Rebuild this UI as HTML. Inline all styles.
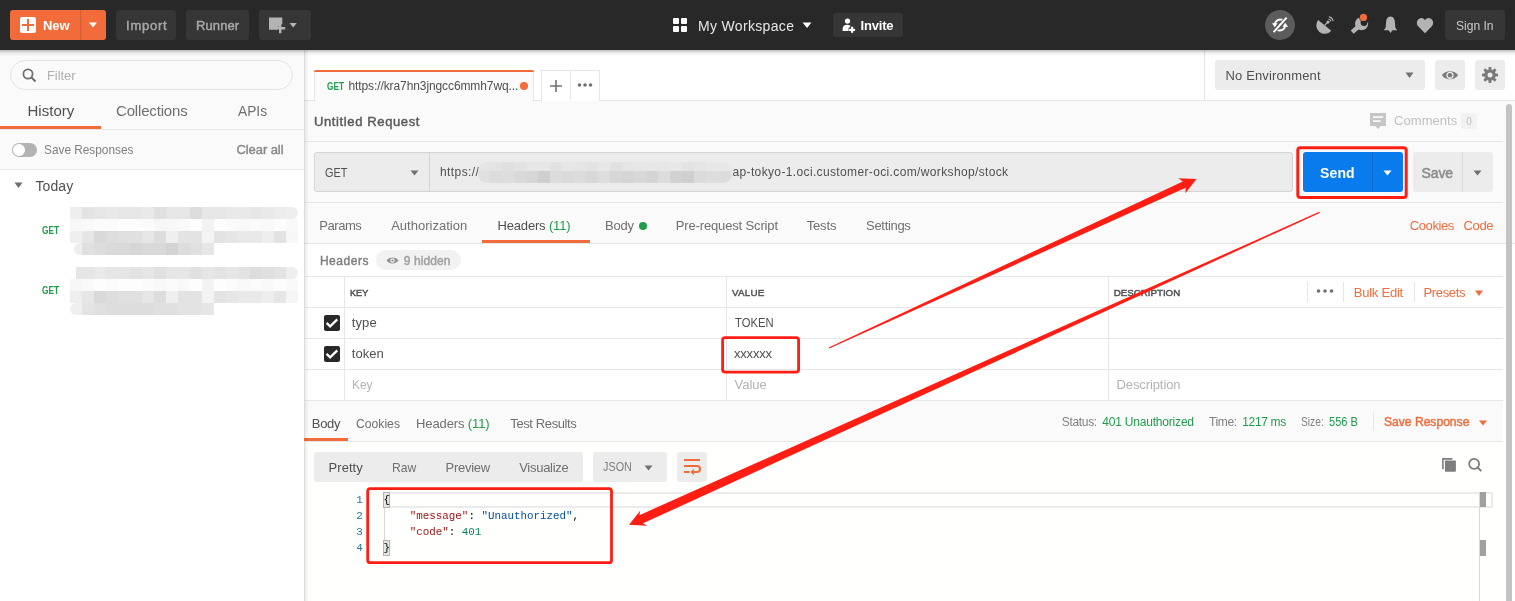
<!DOCTYPE html>
<html><head><meta charset="utf-8"><style>
html,body{margin:0;padding:0;}
body{width:1515px;height:601px;overflow:hidden;position:relative;background:#fff;font-family:"Liberation Sans",sans-serif;}
.t{position:absolute;white-space:pre;-webkit-font-smoothing:antialiased;}
#root{position:absolute;left:0;top:0;width:1515px;height:601px;will-change:transform;}
.r{position:absolute;}
</style></head><body><div id="root">
<div class="r" style="left:0px;top:50px;width:304px;height:551px;background:#fafafa;"></div>
<div class="r" style="left:304px;top:50px;width:1px;height:551px;background:#dcdcdc;"></div>
<div class="r" style="left:305px;top:50px;width:4px;height:551px;background:linear-gradient(90deg,rgba(0,0,0,0.07),rgba(0,0,0,0));z-index:4;"></div>
<div class="r" style="left:305px;top:50px;width:1210px;height:50px;background:#ffffff;"></div>
<div class="r" style="left:305px;top:100px;width:1210px;height:1px;background:#e6e6e6;"></div>
<div class="r" style="left:305px;top:101px;width:1210px;height:142px;background:#fafafa;"></div>
<div class="r" style="left:305px;top:243px;width:1210px;height:1px;background:#e6e6e6;"></div>
<div class="r" style="left:305px;top:244px;width:1198px;height:157px;background:#ffffff;"></div>
<div class="r" style="left:305px;top:401px;width:1198px;height:40px;background:#fafafa;"></div>
<div class="r" style="left:305px;top:441px;width:1198px;height:1px;background:#e6e6e6;"></div>
<div class="r" style="left:305px;top:442px;width:1198px;height:159px;background:#fffffe;"></div>
<div class="r" style="left:0px;top:0px;width:1515px;height:50px;background:#282828;"></div>
<div class="r" style="left:0px;top:50px;width:1515px;height:6px;background:linear-gradient(rgba(0,0,0,0.26),rgba(0,0,0,0.06) 50%,rgba(0,0,0,0));z-index:5;"></div>
<div class="r" style="left:10px;top:10px;width:96px;height:30px;background:#f26b3a;border-radius:3px;"></div>
<div class="r" style="left:80px;top:10px;width:1px;height:30px;background:rgba(0,0,0,0.12);"></div>
<div class="r" style="left:20px;top:17px;width:16px;height:16px;background:#ffffff;border-radius:2px;"></div>
<div class="r" style="left:27px;top:19px;width:2px;height:12px;background:#f26b3a;"></div>
<div class="r" style="left:22px;top:24px;width:12px;height:2px;background:#f26b3a;"></div>
<div class="t" style="left:43.1px;top:19.10px;font-size:13px;line-height:13px;font-weight:700;color:#ffffff;letter-spacing:-0.15px;">New</div>
<svg class="r" style="left:88px;top:22px" width="10" height="6"><path d="M1 0.5H9L5 5.5Z" fill="#fff"/></svg>
<div class="r" style="left:116px;top:10px;width:60px;height:30px;background:#363636;border-radius:3px;"></div>
<div class="t" style="left:126.1px;top:19.20px;font-size:13px;line-height:13px;font-weight:400;-webkit-text-stroke:0.45px #a8a8a8;color:#a8a8a8;letter-spacing:0.74px;">Import</div>
<div class="r" style="left:186px;top:10px;width:63px;height:30px;background:#363636;border-radius:3px;"></div>
<div class="t" style="left:196.1px;top:19.20px;font-size:13px;line-height:13px;font-weight:400;-webkit-text-stroke:0.45px #a8a8a8;color:#a8a8a8;letter-spacing:0.08px;">Runner</div>
<div class="r" style="left:259px;top:10px;width:52px;height:30px;background:#363636;border-radius:3px;"></div>
<svg class="r" style="left:268px;top:16px" width="36" height="18"><path d="M1 1.4H14.3V8.2H12V10.7H9.3V13.8H1Z" fill="#b3b3b3"/><path d="M12.2 7.2V17.2M7.2 12.2H17.2" stroke="#b3b3b3" stroke-width="2.4"/><path d="M21.5 7H28.8L25.15 11.6Z" fill="#b3b3b3"/></svg>
<svg class="r" style="left:673px;top:18px" width="14" height="14"><rect x="0" y="0" width="6" height="6" rx="1" fill="#fff"/><rect x="8" y="0" width="6" height="6" rx="1" fill="#fff"/><rect x="0" y="8" width="6" height="6" rx="1" fill="#fff"/><rect x="8" y="8" width="6" height="6" rx="1" fill="#fff"/></svg>
<div class="t" style="left:697.9px;top:19.15px;font-size:14px;line-height:14px;font-weight:400;color:#e6e6e6;letter-spacing:0.34px;">My Workspace</div>
<svg class="r" style="left:802px;top:22px" width="10" height="7"><path d="M0.5 0.5H9.5L5 6Z" fill="#fff"/></svg>
<div class="r" style="left:833px;top:13px;width:70px;height:24px;background:#363636;border-radius:3px;"></div>
<svg class="r" style="left:842px;top:17px" width="15" height="17"><circle cx="5.5" cy="4.1" r="2.6" fill="#fff"/><path d="M0.6 14.1V11.8C0.6 9.3 2.6 7.8 5.2 7.8C7.4 7.8 8.8 8.8 9.4 10.5V14.1Z" fill="#fff"/><path d="M10.1 9.3V16.3M6.6 12.8H13.6" stroke="#363636" stroke-width="4.4"/><path d="M10.1 9.8V15.8M7.1 12.8H13.1" stroke="#fff" stroke-width="2.2"/></svg>
<div class="t" style="left:860.5px;top:19.00px;font-size:13px;line-height:13px;font-weight:700;color:#ffffff;letter-spacing:-0.19px;">Invite</div>
<svg class="r" style="left:1265px;top:10px" width="30" height="30"><circle cx="15" cy="15" r="15" fill="#5c5c5c"/><path d="M17.9 10.3A5.4 5.4 0 0 0 9.8 14.2" fill="none" stroke="#fff" stroke-width="1.9"/><path d="M6.9 13.2L12.6 13.2 9.8 17.2Z" fill="#fff"/><path d="M12.1 19.7A5.4 5.4 0 0 0 20.2 15.8" fill="none" stroke="#fff" stroke-width="1.9"/><path d="M17.4 16.8L23.1 16.8 20.2 12.8Z" fill="#fff"/><path d="M8.6 22.2L21.6 7.6" stroke="#5c5c5c" stroke-width="3.5"/><path d="M8.6 22.2L21.6 7.6" stroke="#fff" stroke-width="2"/></svg>
<svg class="r" style="left:1314px;top:13px" width="22" height="22"><path d="M4.2 7A8.4 8.4 0 0 0 17.3 17.7Z" fill="#b3b3b3"/><path d="M10.6 12.4L14 9" stroke="#b3b3b3" stroke-width="1.3"/><circle cx="14" cy="9" r="1.5" fill="#b3b3b3"/><path d="M14.6 6.1A2.9 2.9 0 0 1 16.9 8.4M14.9 3.9A5 5 0 0 1 19.1 8.1" fill="none" stroke="#b3b3b3" stroke-width="1.1"/></svg>
<svg class="r" style="left:1350px;top:10px" width="22" height="25"><circle cx="11.6" cy="13.7" r="6.6" fill="#b3b3b3"/><path d="M13.1 15.4L3.7 23.8 0.7 20.4 10.1 12Z" fill="#b3b3b3"/><circle cx="14" cy="12.5" r="3.4" fill="#282828"/><path d="M14 12.5L20 6 20 12Z" fill="#282828"/><circle cx="13.5" cy="7.4" r="4.3" fill="#282828"/><circle cx="13.5" cy="7.4" r="3.6" fill="#f26b3a"/></svg>
<svg class="r" style="left:1382px;top:15px" width="17" height="19"><path d="M8.5 1.6C11.6 1.6 12.8 4.5 13 8L13.3 12.5L15.2 15.3H1.8L3.7 12.5L4 8C4.2 4.5 5.4 1.6 8.5 1.6Z" fill="#b3b3b3"/><path d="M6.4 15L8.5 18.1L10.6 15Z" fill="#b3b3b3"/></svg>
<svg class="r" style="left:1416px;top:17px" width="18" height="17"><path d="M9 16.2L2.2 9.2C0.2 7.2 0.5 3.5 2.8 1.9C5 0.4 7.7 1.2 9 3.2C10.3 1.2 13 0.4 15.2 1.9C17.5 3.5 17.8 7.2 15.8 9.2Z" fill="#b3b3b3"/></svg>
<div class="r" style="left:1445px;top:10px;width:60px;height:30px;background:#363636;border-radius:3px;"></div>
<div class="t" style="left:1455.9px;top:19.10px;font-size:13px;line-height:13px;font-weight:400;color:#c8c8c8;transform:scaleX(0.928);transform-origin:0 0;">Sign In</div>
<div class="r" style="left:10px;top:60px;width:283px;height:30px;background:#fafafa;border:1px solid #e3e3e3;border-radius:15px;box-sizing:border-box;"></div>
<svg class="r" style="left:22px;top:68px" width="15" height="15"><circle cx="6" cy="6" r="4.6" fill="none" stroke="#707070" stroke-width="1.8"/><path d="M9.5 9.5L13.5 13.5" stroke="#707070" stroke-width="2"/></svg>
<div class="t" style="left:47.0px;top:69.00px;font-size:13px;line-height:13px;font-weight:400;color:#b0b0b0;letter-spacing:-0.07px;">Filter</div>
<div class="t" style="left:27.5px;top:103.30px;font-size:15px;line-height:15px;font-weight:400;color:#505050;letter-spacing:0.02px;">History</div>
<div class="t" style="left:116.0px;top:103.30px;font-size:15px;line-height:15px;font-weight:400;color:#707070;letter-spacing:-0.17px;">Collections</div>
<div class="t" style="left:238.2px;top:103.30px;font-size:15px;line-height:15px;font-weight:400;color:#707070;transform:scaleX(0.918);transform-origin:0 0;">APIs</div>
<div class="r" style="left:0px;top:126px;width:101px;height:3px;background:#f26b3a;"></div>
<div class="r" style="left:0px;top:129px;width:304px;height:1px;background:#e6e6e6;"></div>
<div class="r" style="left:12px;top:143px;width:25px;height:14px;background:#b3b3b3;border-radius:7px;"></div>
<div class="r" style="left:13px;top:144px;width:12px;height:12px;background:#ffffff;border-radius:6px;"></div>
<div class="t" style="left:43.5px;top:142.90px;font-size:13px;line-height:13px;font-weight:400;color:#808080;transform:scaleX(0.910);transform-origin:0 0;">Save Responses</div>
<div class="t" style="left:236.5px;top:142.90px;font-size:13px;line-height:13px;font-weight:400;-webkit-text-stroke:0.45px #8a8a8a;color:#8a8a8a;letter-spacing:-0.08px;">Clear all</div>
<div class="r" style="left:0px;top:169px;width:304px;height:1px;background:#e6e6e6;"></div>
<div class="r" style="left:0px;top:170px;width:304px;height:431px;background:#ffffff;"></div>
<svg class="r" style="left:14px;top:182px" width="9" height="7"><path d="M0.5 0.5H8.5L4.5 6Z" fill="#707070"/></svg>
<div class="t" style="left:35.5px;top:179.15px;font-size:14px;line-height:14px;font-weight:400;color:#505050;letter-spacing:0.07px;">Today</div>
<div class="t" style="left:42.3px;top:225.63px;font-size:10px;line-height:10px;font-weight:700;color:#1f9d4c;transform:scaleX(0.830);transform-origin:0 0;">GET</div>
<div class="t" style="left:42.3px;top:285.64px;font-size:10px;line-height:10px;font-weight:700;color:#1f9d4c;transform:scaleX(0.830);transform-origin:0 0;">GET</div>
<div class="r" style="left:314px;top:70px;width:220px;height:31px;background:#fafafa;border:1px solid #e6e6e6;border-bottom:none;border-top:none;box-sizing:border-box;"></div>
<div class="r" style="left:314px;top:70px;width:220px;height:2px;background:#f26b3a;border-radius:2px 2px 0 0;"></div>
<div class="t" style="left:326.5px;top:81.83px;font-size:10px;line-height:10px;font-weight:700;color:#1f9d4c;transform:scaleX(0.825);transform-origin:0 0;">GET</div>
<div class="t" style="left:348.5px;top:80.44px;font-size:12px;line-height:12px;font-weight:400;color:#505050;letter-spacing:-0.10px;">https://kra7hn3jngcc6mmh7wq...</div>
<div class="r" style="left:520px;top:82px;width:8px;height:8px;border-radius:4px;background:#f26b3a"></div>
<div class="r" style="left:541px;top:70px;width:59px;height:31px;background:#ffffff;border:1px solid #e6e6e6;border-bottom:none;box-sizing:border-box;"></div>
<div class="r" style="left:570px;top:70px;width:1px;height:30px;background:#e6e6e6;"></div>
<svg class="r" style="left:549px;top:79px" width="14" height="14"><path d="M7 1V13M1 7H13" stroke="#707070" stroke-width="1.6"/></svg>
<svg class="r" style="left:577px;top:82px" width="16" height="6"><circle cx="2.5" cy="3" r="1.8" fill="#707070"/><circle cx="8" cy="3" r="1.8" fill="#707070"/><circle cx="13.5" cy="3" r="1.8" fill="#707070"/></svg>
<div class="r" style="left:1204px;top:50px;width:1px;height:50px;background:#e6e6e6;"></div>
<div class="r" style="left:1215px;top:60px;width:210px;height:30px;background:#ececec;border-radius:3px;"></div>
<div class="t" style="left:1225.5px;top:69.20px;font-size:13px;line-height:13px;font-weight:400;color:#505050;letter-spacing:0.14px;">No Environment</div>
<svg class="r" style="left:1405px;top:72px" width="9" height="7"><path d="M0.5 0.5H8.5L4.5 6Z" fill="#707070"/></svg>
<div class="r" style="left:1435px;top:60px;width:30px;height:30px;background:#ececec;border-radius:3px;"></div>
<svg class="r" style="left:1441px;top:70px" width="18" height="11"><path d="M1 5.3C4 0 14 0 17 5.3C14 10.6 4 10.6 1 5.3Z" fill="#7a7a7a"/><circle cx="9" cy="5.3" r="3.6" fill="#ececec"/><circle cx="9" cy="5.3" r="2.3" fill="#7a7a7a"/><path d="M9 5.3L9 2.9A2.4 2.4 0 0 1 11.4 5.3Z" fill="#ececec" opacity="0"/></svg>
<div class="r" style="left:1475px;top:60px;width:30px;height:30px;background:#ececec;border-radius:3px;"></div>
<svg class="r" style="left:1482px;top:67px" width="16" height="16"><g fill="#7a7a7a"><circle cx="8" cy="8" r="5.8"/><rect x="6.6" y="0" width="2.8" height="16"/><rect x="0" y="6.6" width="16" height="2.8"/><rect x="6.6" y="0" width="2.8" height="16" transform="rotate(45 8 8)"/><rect x="6.6" y="0" width="2.8" height="16" transform="rotate(-45 8 8)"/></g><circle cx="8" cy="8" r="2.5" fill="#ececec"/></svg>
<div class="t" style="left:313.9px;top:115.00px;font-size:13px;line-height:13px;font-weight:400;-webkit-text-stroke:0.45px #5a5a5a;color:#5a5a5a;letter-spacing:0.63px;">Untitled Request</div>
<svg class="r" style="left:1370px;top:113px" width="16" height="16"><path d="M0 0H16V13H10.8L8 15.9 5.2 13H0Z" fill="#c6c6c6"/><path d="M3 4.1H13.2M3 8.1H10.6" stroke="#fafafa" stroke-width="1.9"/></svg>
<div class="t" style="left:1394.1px;top:114.00px;font-size:13px;line-height:13px;font-weight:400;color:#c0c0c0;letter-spacing:0.03px;">Comments</div>
<div class="r" style="left:1461px;top:113px;width:16px;height:16px;background:#f2f2f2;border-radius:2px;"></div>
<div class="t" style="left:1466.3px;top:116.53px;font-size:10px;line-height:10px;font-weight:400;color:#c0c0c0;">0</div>
<div class="r" style="left:305px;top:141px;width:1198px;height:1px;background:#e6e6e6;"></div>
<div class="r" style="left:314px;top:152px;width:979px;height:40px;background:#ececec;border:1px solid #d4d4d4;border-radius:3px;box-sizing:border-box;"></div>
<div class="r" style="left:429px;top:153px;width:1px;height:38px;background:#d4d4d4;"></div>
<div class="t" style="left:325.1px;top:166.84px;font-size:12px;line-height:12px;font-weight:400;color:#505050;transform:scaleX(0.903);transform-origin:0 0;">GET</div>
<svg class="r" style="left:410px;top:170px" width="9" height="6"><path d="M0.5 0.5H8.5L4.5 5.5Z" fill="#707070"/></svg>
<div class="t" style="left:439.9px;top:165.84px;font-size:12px;line-height:12px;font-weight:400;color:#505050;letter-spacing:0.43px;">https://</div>
<div class="t" style="left:732.5px;top:165.84px;font-size:12px;line-height:12px;font-weight:400;color:#505050;letter-spacing:0.36px;">ap-tokyo-1.oci.customer-oci.com/workshop/stock</div>
<div class="r" style="left:1303px;top:152px;width:100px;height:40px;background:#097bed;border-radius:3px;"></div>
<div class="r" style="left:1372px;top:152px;width:1px;height:40px;background:rgba(0,0,0,0.12);"></div>
<div class="t" style="left:1320.1px;top:166.15px;font-size:14px;line-height:14px;font-weight:700;color:#ffffff;letter-spacing:0.10px;">Send</div>
<svg class="r" style="left:1383px;top:170px" width="9" height="6"><path d="M0.5 0.5H8.5L4.5 5.5Z" fill="#fff"/></svg>
<div class="r" style="left:1413px;top:152px;width:80px;height:40px;background:#ececec;border-radius:3px;"></div>
<div class="r" style="left:1462px;top:152px;width:1px;height:40px;background:#dcdcdc;"></div>
<div class="t" style="left:1421.5px;top:166.15px;font-size:14px;line-height:14px;font-weight:400;-webkit-text-stroke:0.45px #8a8a8a;color:#8a8a8a;letter-spacing:-0.10px;">Save</div>
<svg class="r" style="left:1473px;top:170px" width="9" height="6"><path d="M0.5 0.5H8.5L4.5 5.5Z" fill="#707070"/></svg>
<div class="r" style="left:305px;top:202px;width:1198px;height:1px;background:#e6e6e6;"></div>
<div class="t" style="left:319.2px;top:219.40px;font-size:13px;line-height:13px;font-weight:400;color:#707070;letter-spacing:-0.43px;">Params</div>
<div class="t" style="left:391.2px;top:219.40px;font-size:13px;line-height:13px;font-weight:400;color:#707070;letter-spacing:0.01px;">Authorization</div>
<div class="t" style="left:497.5px;top:219.40px;font-size:13px;line-height:13px;font-weight:400;color:#505050;letter-spacing:-0.17px;">Headers <span style="color:#1f9d4c">(11)</span></div>
<div class="r" style="left:482px;top:240px;width:108px;height:3px;background:#f26b3a;"></div>
<div class="t" style="left:605.1px;top:219.40px;font-size:13px;line-height:13px;font-weight:400;color:#707070;letter-spacing:-0.20px;">Body</div>
<div class="r" style="left:639px;top:222px;width:8px;height:8px;border-radius:4px;background:#1f9d4c"></div>
<div class="t" style="left:675.7px;top:219.40px;font-size:13px;line-height:13px;font-weight:400;color:#707070;letter-spacing:-0.14px;">Pre-request Script</div>
<div class="t" style="left:806.7px;top:219.40px;font-size:13px;line-height:13px;font-weight:400;color:#707070;letter-spacing:-0.15px;">Tests</div>
<div class="t" style="left:866.1px;top:219.40px;font-size:13px;line-height:13px;font-weight:400;color:#707070;letter-spacing:-0.32px;">Settings</div>
<div class="t" style="left:1409.8px;top:219.40px;font-size:13px;line-height:13px;font-weight:400;color:#f26b3a;letter-spacing:-0.42px;">Cookies</div>
<div class="t" style="left:1463.5px;top:219.40px;font-size:13px;line-height:13px;font-weight:400;color:#f26b3a;letter-spacing:-0.35px;">Code</div>
<div class="t" style="left:319.9px;top:255.24px;font-size:12px;line-height:12px;font-weight:400;-webkit-text-stroke:0.45px #808080;color:#808080;letter-spacing:0.53px;">Headers</div>
<div class="r" style="left:376px;top:250px;width:85px;height:20px;background:#f2f2f2;border-radius:10px;"></div>
<svg class="r" style="left:386px;top:256px" width="13" height="9"><path d="M0.5 4.5C3 0.5 10 0.5 12.5 4.5C10 8.5 3 8.5 0.5 4.5Z" fill="#909090"/><circle cx="6.5" cy="4.5" r="2.2" fill="#f2f2f2"/><circle cx="6.5" cy="4.5" r="1.1" fill="#909090"/></svg>
<div class="t" style="left:403.8px;top:255.24px;font-size:12px;line-height:12px;font-weight:400;-webkit-text-stroke:0.45px #a0a0a0;color:#a0a0a0;letter-spacing:0.09px;">9 hidden</div>
<div class="r" style="left:305px;top:276px;width:1198px;height:1px;background:#e6e6e6;"></div>
<div class="r" style="left:305px;top:307px;width:1198px;height:1px;background:#e6e6e6;"></div>
<div class="r" style="left:305px;top:338px;width:1198px;height:1px;background:#e6e6e6;"></div>
<div class="r" style="left:305px;top:369px;width:1198px;height:1px;background:#e6e6e6;"></div>
<div class="r" style="left:305px;top:400px;width:1198px;height:1px;background:#e6e6e6;"></div>
<div class="r" style="left:344px;top:277px;width:1px;height:123px;background:#e6e6e6;"></div>
<div class="r" style="left:726px;top:277px;width:1px;height:123px;background:#e6e6e6;"></div>
<div class="r" style="left:1108px;top:277px;width:1px;height:123px;background:#e6e6e6;"></div>
<div class="t" style="left:349.9px;top:287.70px;font-size:9.8px;line-height:9.8px;font-weight:400;-webkit-text-stroke:0.45px #505050;color:#505050;transform:scaleX(0.930);transform-origin:0 0;">KEY</div>
<div class="t" style="left:732.1px;top:287.70px;font-size:9.8px;line-height:9.8px;font-weight:400;-webkit-text-stroke:0.45px #505050;color:#505050;letter-spacing:0.19px;">VALUE</div>
<div class="t" style="left:1113.7px;top:287.70px;font-size:9.8px;line-height:9.8px;font-weight:400;-webkit-text-stroke:0.45px #505050;color:#505050;letter-spacing:-0.04px;">DESCRIPTION</div>
<div class="r" style="left:1307px;top:282px;width:1px;height:20px;background:#e6e6e6;"></div>
<svg class="r" style="left:1316px;top:288px" width="18" height="6"><circle cx="2.5" cy="3" r="1.8" fill="#707070"/><circle cx="9" cy="3" r="1.8" fill="#707070"/><circle cx="15.5" cy="3" r="1.8" fill="#707070"/></svg>
<div class="r" style="left:1343px;top:282px;width:1px;height:20px;background:#e6e6e6;"></div>
<div class="t" style="left:1353.7px;top:286.40px;font-size:13px;line-height:13px;font-weight:400;color:#f26b3a;letter-spacing:-0.22px;">Bulk Edit</div>
<div class="r" style="left:1414px;top:282px;width:1px;height:20px;background:#e6e6e6;"></div>
<div class="t" style="left:1423.5px;top:286.40px;font-size:13px;line-height:13px;font-weight:400;color:#f26b3a;letter-spacing:-0.34px;">Presets</div>
<svg class="r" style="left:1475px;top:290px" width="8" height="7"><path d="M0 0.5H8L4 6Z" fill="#f26b3a"/></svg>
<div class="r" style="left:324px;top:315px;width:16px;height:16px;background:#282828;border-radius:2px;"></div>
<svg class="r" style="left:324px;top:315px" width="16" height="16"><path d="M2.6 7.9L6.1 11.4 13.3 4.4" fill="none" stroke="#fff" stroke-width="2.3"/></svg>
<div class="r" style="left:324px;top:346px;width:16px;height:16px;background:#282828;border-radius:2px;"></div>
<svg class="r" style="left:324px;top:346px" width="16" height="16"><path d="M2.6 7.9L6.1 11.4 13.3 4.4" fill="none" stroke="#fff" stroke-width="2.3"/></svg>
<div class="t" style="left:351.8px;top:316.00px;font-size:13px;line-height:13px;font-weight:400;color:#505050;letter-spacing:0.09px;">type</div>
<div class="t" style="left:351.8px;top:347.00px;font-size:13px;line-height:13px;font-weight:400;color:#505050;letter-spacing:0.06px;">token</div>
<div class="t" style="left:351.8px;top:378.00px;font-size:13px;line-height:13px;font-weight:400;color:#b3b3b3;transform:scaleX(0.917);transform-origin:0 0;">Key</div>
<div class="t" style="left:734.5px;top:316.00px;font-size:13px;line-height:13px;font-weight:400;color:#505050;transform:scaleX(0.864);transform-origin:0 0;">TOKEN</div>
<div class="t" style="left:734.0px;top:347.00px;font-size:13px;line-height:13px;font-weight:400;color:#505050;letter-spacing:-0.19px;">xxxxxx</div>
<div class="t" style="left:734.5px;top:378.00px;font-size:13px;line-height:13px;font-weight:400;color:#b3b3b3;">Value</div>
<div class="t" style="left:1116.5px;top:378.00px;font-size:13px;line-height:13px;font-weight:400;color:#b3b3b3;letter-spacing:-0.10px;">Description</div>
<div class="t" style="left:311.8px;top:417.40px;font-size:13px;line-height:13px;font-weight:400;color:#505050;letter-spacing:-0.30px;">Body</div>
<div class="r" style="left:304px;top:438px;width:44px;height:3px;background:#f26b3a;"></div>
<div class="t" style="left:356.1px;top:417.40px;font-size:13px;line-height:13px;font-weight:400;color:#707070;transform:scaleX(0.936);transform-origin:0 0;">Cookies</div>
<div class="t" style="left:416.1px;top:417.40px;font-size:13px;line-height:13px;font-weight:400;color:#707070;letter-spacing:-0.13px;">Headers <span style="color:#1f9d4c">(11)</span></div>
<div class="t" style="left:510.3px;top:417.40px;font-size:13px;line-height:13px;font-weight:400;color:#707070;letter-spacing:-0.39px;">Test Results</div>
<div class="t" style="left:1061.8px;top:415.84px;font-size:12px;line-height:12px;font-weight:400;color:#808080;letter-spacing:-0.33px;">Status:</div>
<div class="t" style="left:1102.3px;top:415.84px;font-size:12px;line-height:12px;font-weight:400;color:#1f9d4c;letter-spacing:-0.20px;">401 Unauthorized</div>
<div class="t" style="left:1209.1px;top:415.84px;font-size:12px;line-height:12px;font-weight:400;color:#808080;letter-spacing:-0.40px;">Time:</div>
<div class="t" style="left:1242.3px;top:415.84px;font-size:12px;line-height:12px;font-weight:400;color:#1f9d4c;letter-spacing:-0.35px;">1217 ms</div>
<div class="t" style="left:1300.5px;top:415.84px;font-size:12px;line-height:12px;font-weight:400;color:#808080;transform:scaleX(0.855);transform-origin:0 0;">Size:</div>
<div class="t" style="left:1328.8px;top:415.84px;font-size:12px;line-height:12px;font-weight:400;color:#1f9d4c;transform:scaleX(0.921);transform-origin:0 0;">556 B</div>
<div class="r" style="left:1373px;top:412px;width:1px;height:19px;background:#e6e6e6;"></div>
<div class="t" style="left:1384.1px;top:414.50px;font-size:13px;line-height:13px;font-weight:400;-webkit-text-stroke:0.45px #f26b3a;color:#f26b3a;transform:scaleX(0.930);transform-origin:0 0;">Save Response</div>
<svg class="r" style="left:1479px;top:420px" width="8" height="6"><path d="M0 0.5H8L4 5.5Z" fill="#f26b3a"/></svg>
<div class="r" style="left:314px;top:452px;width:269px;height:30px;background:#ececec;border-radius:3px;"></div>
<div class="t" style="left:328.5px;top:461.00px;font-size:13px;line-height:13px;font-weight:400;color:#505050;letter-spacing:0.07px;">Pretty</div>
<div class="t" style="left:392.0px;top:461.00px;font-size:13px;line-height:13px;font-weight:400;color:#707070;transform:scaleX(0.933);transform-origin:0 0;">Raw</div>
<div class="t" style="left:445.5px;top:461.00px;font-size:13px;line-height:13px;font-weight:400;color:#707070;letter-spacing:-0.25px;">Preview</div>
<div class="t" style="left:519.2px;top:461.00px;font-size:13px;line-height:13px;font-weight:400;color:#707070;letter-spacing:-0.27px;">Visualize</div>
<div class="r" style="left:593px;top:452px;width:74px;height:30px;background:#ececec;border-radius:3px;"></div>
<div class="t" style="left:602.5px;top:461.42px;font-size:12.5px;line-height:12.5px;font-weight:400;color:#808080;transform:scaleX(0.866);transform-origin:0 0;">JSON</div>
<svg class="r" style="left:644px;top:465px" width="9" height="6"><path d="M0.5 0.5H8.5L4.5 5.5Z" fill="#707070"/></svg>
<div class="r" style="left:677px;top:452px;width:30px;height:30px;background:#ececec;border-radius:3px;"></div>
<svg class="r" style="left:683px;top:458px" width="18" height="18"><path d="M1 2H17M1 8H14A3 3 0 0 1 14 14H10M1 14H6.5" fill="none" stroke="#f26b3a" stroke-width="2"/><path d="M7.3 14L10.8 10.7V17.3Z" fill="#f26b3a"/></svg>
<svg class="r" style="left:1442px;top:458px" width="15" height="15"><path d="M0.9 11.2V0.9H10.4" fill="none" stroke="#7e7e7e" stroke-width="1.6"/><rect x="2.9" y="2.4" width="11" height="11.3" rx="0.8" fill="#7e7e7e"/></svg>
<svg class="r" style="left:1467px;top:457px" width="16" height="16"><circle cx="7.1" cy="6.9" r="5" fill="none" stroke="#7a7a7a" stroke-width="1.7"/><path d="M10.6 10.4L14.3 14.1" stroke="#7a7a7a" stroke-width="2"/></svg>
<div class="r" style="left:384px;top:492px;width:1109px;height:16px;background:#fffffe;border:2px solid #ebebeb;border-left:none;box-sizing:border-box;"></div>
<div class="r" style="left:1479px;top:492px;width:1px;height:109px;background:#d8d8d8;"></div>
<div class="r" style="left:1480px;top:492px;width:6px;height:15px;background:#a0a0a0;"></div>
<div class="r" style="left:1480px;top:540px;width:6px;height:16px;background:#a0a0a0;"></div>
<div class="r" style="left:384px;top:507px;width:1px;height:40px;background:#d8d8d8;"></div>
<div class="t" style="left:356.3px;top:495.32px;font-size:10.85px;line-height:10.85px;font-weight:400;color:#237893;font-family:'Liberation Mono',monospace;">1</div>
<div class="t" style="left:356.3px;top:511.32px;font-size:10.85px;line-height:10.85px;font-weight:400;color:#237893;font-family:'Liberation Mono',monospace;">2</div>
<div class="t" style="left:356.3px;top:527.32px;font-size:10.85px;line-height:10.85px;font-weight:400;color:#237893;font-family:'Liberation Mono',monospace;">3</div>
<div class="t" style="left:356.3px;top:543.32px;font-size:10.85px;line-height:10.85px;font-weight:400;color:#237893;font-family:'Liberation Mono',monospace;">4</div>
<div class="r" style="left:383px;top:492px;width:7px;height:16px;background:#e3e8e3;border:1px solid #b4b4b4;box-sizing:border-box;"></div>
<div class="r" style="left:383px;top:540px;width:7px;height:16px;background:#e3e8e3;border:1px solid #b4b4b4;box-sizing:border-box;"></div>
<div class="t" style="left:383.5px;top:495.32px;font-size:10.85px;line-height:10.85px;font-weight:400;color:#000;font-family:'Liberation Mono',monospace;">{</div>
<div class="t" style="left:409.8px;top:511.32px;font-size:10.85px;line-height:10.85px;font-weight:400;color:#000;font-family:'Liberation Mono',monospace;"><span style="color:#a31515">"message"</span>: <span style="color:#0451a5">"Unauthorized"</span>,</div>
<div class="t" style="left:409.8px;top:527.32px;font-size:10.85px;line-height:10.85px;font-weight:400;color:#000;font-family:'Liberation Mono',monospace;"><span style="color:#a31515">"code"</span>: <span style="color:#098658">401</span></div>
<div class="t" style="left:383.5px;top:543.32px;font-size:10.85px;line-height:10.85px;font-weight:400;color:#000;font-family:'Liberation Mono',monospace;">}</div>
<div class="r" style="left:478px;top:162px;width:254px;height:21px;border-radius:9px;overflow:hidden">
<div class="r" style="left:0px;top:0;width:12px;height:9px;background:#e4e4e4"></div>
<div class="r" style="left:12px;top:0;width:12px;height:9px;background:#e3e3e3"></div>
<div class="r" style="left:24px;top:0;width:12px;height:9px;background:#e0e0e0"></div>
<div class="r" style="left:36px;top:0;width:12px;height:9px;background:#e3e3e3"></div>
<div class="r" style="left:48px;top:0;width:12px;height:9px;background:#e6e6e6"></div>
<div class="r" style="left:60px;top:0;width:12px;height:9px;background:#e6e6e6"></div>
<div class="r" style="left:72px;top:0;width:12px;height:9px;background:#e2e2e2"></div>
<div class="r" style="left:84px;top:0;width:12px;height:9px;background:#e6e6e6"></div>
<div class="r" style="left:96px;top:0;width:12px;height:9px;background:#e5e5e5"></div>
<div class="r" style="left:108px;top:0;width:12px;height:9px;background:#e3e3e3"></div>
<div class="r" style="left:120px;top:0;width:12px;height:9px;background:#e7e7e7"></div>
<div class="r" style="left:132px;top:0;width:12px;height:9px;background:#e1e1e1"></div>
<div class="r" style="left:144px;top:0;width:12px;height:9px;background:#e5e5e5"></div>
<div class="r" style="left:156px;top:0;width:12px;height:9px;background:#e6e6e6"></div>
<div class="r" style="left:168px;top:0;width:12px;height:9px;background:#e7e7e7"></div>
<div class="r" style="left:180px;top:0;width:12px;height:9px;background:#e6e6e6"></div>
<div class="r" style="left:192px;top:0;width:12px;height:9px;background:#e8e8e8"></div>
<div class="r" style="left:204px;top:0;width:12px;height:9px;background:#e3e3e3"></div>
<div class="r" style="left:216px;top:0;width:12px;height:9px;background:#e5e5e5"></div>
<div class="r" style="left:228px;top:0;width:12px;height:9px;background:#e8e8e8"></div>
<div class="r" style="left:240px;top:0;width:12px;height:9px;background:#e8e8e8"></div>
<div class="r" style="left:252px;top:0;width:12px;height:9px;background:#e6e6e6"></div>
<div class="r" style="left:0px;top:9px;width:12px;height:12px;background:#e0e0e0"></div>
<div class="r" style="left:12px;top:9px;width:12px;height:12px;background:#dcdcdc"></div>
<div class="r" style="left:24px;top:9px;width:12px;height:12px;background:#dddddd"></div>
<div class="r" style="left:36px;top:9px;width:12px;height:12px;background:#d9d9d9"></div>
<div class="r" style="left:48px;top:9px;width:12px;height:12px;background:#d6d6d6"></div>
<div class="r" style="left:60px;top:9px;width:12px;height:12px;background:#cfcfcf"></div>
<div class="r" style="left:72px;top:9px;width:12px;height:12px;background:#dcdcdc"></div>
<div class="r" style="left:84px;top:9px;width:12px;height:12px;background:#dadada"></div>
<div class="r" style="left:96px;top:9px;width:12px;height:12px;background:#dcdcdc"></div>
<div class="r" style="left:108px;top:9px;width:12px;height:12px;background:#d8d8d8"></div>
<div class="r" style="left:120px;top:9px;width:12px;height:12px;background:#dddddd"></div>
<div class="r" style="left:132px;top:9px;width:12px;height:12px;background:#d7d7d7"></div>
<div class="r" style="left:144px;top:9px;width:12px;height:12px;background:#d5d5d5"></div>
<div class="r" style="left:156px;top:9px;width:12px;height:12px;background:#d8d8d8"></div>
<div class="r" style="left:168px;top:9px;width:12px;height:12px;background:#d4d4d4"></div>
<div class="r" style="left:180px;top:9px;width:12px;height:12px;background:#dcdcdc"></div>
<div class="r" style="left:192px;top:9px;width:12px;height:12px;background:#d2d2d2"></div>
<div class="r" style="left:204px;top:9px;width:12px;height:12px;background:#cfcfcf"></div>
<div class="r" style="left:216px;top:9px;width:12px;height:12px;background:#dbdbdb"></div>
<div class="r" style="left:228px;top:9px;width:12px;height:12px;background:#dddddd"></div>
<div class="r" style="left:240px;top:9px;width:12px;height:12px;background:#dcdcdc"></div>
<div class="r" style="left:252px;top:9px;width:12px;height:12px;background:#e0e0e0"></div>
</div>
<div class="r" style="left:70px;top:207px;width:228px;height:12px;border-radius:0 6px 6px 0;overflow:hidden">
<div class="r" style="left:0px;top:0;width:12px;height:12px;background:#eeeeee"></div>
<div class="r" style="left:12px;top:0;width:12px;height:12px;background:#e3e3e3"></div>
<div class="r" style="left:24px;top:0;width:12px;height:12px;background:#e6e6e6"></div>
<div class="r" style="left:36px;top:0;width:12px;height:12px;background:#e9e9e9"></div>
<div class="r" style="left:48px;top:0;width:12px;height:12px;background:#e6e6e6"></div>
<div class="r" style="left:60px;top:0;width:12px;height:12px;background:#e6e6e6"></div>
<div class="r" style="left:72px;top:0;width:12px;height:12px;background:#e9e9e9"></div>
<div class="r" style="left:84px;top:0;width:12px;height:12px;background:#e0e0e0"></div>
<div class="r" style="left:96px;top:0;width:12px;height:12px;background:#e6e6e6"></div>
<div class="r" style="left:108px;top:0;width:12px;height:12px;background:#e6e6e6"></div>
<div class="r" style="left:120px;top:0;width:12px;height:12px;background:#dddddd"></div>
<div class="r" style="left:132px;top:0;width:12px;height:12px;background:#e6e6e6"></div>
<div class="r" style="left:144px;top:0;width:12px;height:12px;background:#e6e6e6"></div>
<div class="r" style="left:156px;top:0;width:12px;height:12px;background:#e9e9e9"></div>
<div class="r" style="left:168px;top:0;width:12px;height:12px;background:#e9e9e9"></div>
<div class="r" style="left:180px;top:0;width:12px;height:12px;background:#e6e6e6"></div>
<div class="r" style="left:192px;top:0;width:12px;height:12px;background:#e9e9e9"></div>
<div class="r" style="left:204px;top:0;width:12px;height:12px;background:#ececec"></div>
<div class="r" style="left:216px;top:0;width:12px;height:12px;background:#eeeeee"></div>
</div>
<div class="r" style="left:70px;top:219px;width:12px;height:12px;background:#f7f7f7;"></div>
<div class="r" style="left:82px;top:219px;width:12px;height:12px;background:#f9f9f9;"></div>
<div class="r" style="left:94px;top:219px;width:12px;height:12px;background:#fbfbfb;"></div>
<div class="r" style="left:106px;top:219px;width:12px;height:12px;background:#fbfbfb;"></div>
<div class="r" style="left:118px;top:219px;width:12px;height:12px;background:#fdfdfd;"></div>
<div class="r" style="left:130px;top:219px;width:12px;height:12px;background:#fdfdfd;"></div>
<div class="r" style="left:142px;top:219px;width:12px;height:12px;background:#fbfbfb;"></div>
<div class="r" style="left:154px;top:219px;width:12px;height:12px;background:#f7f7f7;"></div>
<div class="r" style="left:166px;top:219px;width:12px;height:12px;background:#f7f7f7;"></div>
<div class="r" style="left:178px;top:219px;width:12px;height:12px;background:#f9f9f9;"></div>
<div class="r" style="left:190px;top:219px;width:12px;height:12px;background:#fdfdfd;"></div>
<div class="r" style="left:202px;top:219px;width:12px;height:12px;background:#f3f3f3;"></div>
<div class="r" style="left:214px;top:219px;width:12px;height:12px;background:#fdfdfd;"></div>
<div class="r" style="left:226px;top:219px;width:12px;height:12px;background:#fbfbfb;"></div>
<div class="r" style="left:238px;top:219px;width:12px;height:12px;background:#f9f9f9;"></div>
<div class="r" style="left:250px;top:219px;width:12px;height:12px;background:#fbfbfb;"></div>
<div class="r" style="left:262px;top:219px;width:12px;height:12px;background:#f9f9f9;"></div>
<div class="r" style="left:274px;top:219px;width:12px;height:12px;background:#fdfdfd;"></div>
<div class="r" style="left:286px;top:219px;width:12px;height:12px;background:#f9f9f9;"></div>
<div class="r" style="left:70px;top:231px;width:12px;height:12px;background:#efefef;"></div>
<div class="r" style="left:82px;top:231px;width:12px;height:12px;background:#e6e6e6;"></div>
<div class="r" style="left:94px;top:231px;width:12px;height:12px;background:#d9d9d9;"></div>
<div class="r" style="left:106px;top:231px;width:12px;height:12px;background:#dddddd;"></div>
<div class="r" style="left:118px;top:231px;width:12px;height:12px;background:#e0e0e0;"></div>
<div class="r" style="left:130px;top:231px;width:12px;height:12px;background:#e0e0e0;"></div>
<div class="r" style="left:142px;top:231px;width:12px;height:12px;background:#e6e6e6;"></div>
<div class="r" style="left:154px;top:231px;width:12px;height:12px;background:#dddddd;"></div>
<div class="r" style="left:166px;top:231px;width:12px;height:12px;background:#efefef;"></div>
<div class="r" style="left:178px;top:231px;width:12px;height:12px;background:#e3e3e3;"></div>
<div class="r" style="left:190px;top:231px;width:12px;height:12px;background:#e3e3e3;"></div>
<div class="r" style="left:202px;top:231px;width:12px;height:12px;background:#f3f3f3;"></div>
<div class="r" style="left:214px;top:231px;width:12px;height:12px;background:#e3e3e3;"></div>
<div class="r" style="left:226px;top:231px;width:12px;height:12px;background:#e6e6e6;"></div>
<div class="r" style="left:238px;top:231px;width:12px;height:12px;background:#e9e9e9;"></div>
<div class="r" style="left:250px;top:231px;width:12px;height:12px;background:#e9e9e9;"></div>
<div class="r" style="left:262px;top:231px;width:12px;height:12px;background:#eeeeee;"></div>
<div class="r" style="left:274px;top:231px;width:12px;height:12px;background:#e3e3e3;"></div>
<div class="r" style="left:286px;top:231px;width:12px;height:12px;background:#f7f7f7;"></div>
<div class="r" style="left:74px;top:243px;width:140px;height:12px;border-radius:6px 0 0 6px;overflow:hidden">
<div class="r" style="left:-4px;top:0;width:12px;height:12px;background:#eeeeee"></div>
<div class="r" style="left:8px;top:0;width:12px;height:12px;background:#e0e0e0"></div>
<div class="r" style="left:20px;top:0;width:12px;height:12px;background:#dddddd"></div>
<div class="r" style="left:32px;top:0;width:12px;height:12px;background:#d9d9d9"></div>
<div class="r" style="left:44px;top:0;width:12px;height:12px;background:#d9d9d9"></div>
<div class="r" style="left:56px;top:0;width:12px;height:12px;background:#d6d6d6"></div>
<div class="r" style="left:68px;top:0;width:12px;height:12px;background:#d9d9d9"></div>
<div class="r" style="left:80px;top:0;width:12px;height:12px;background:#d9d9d9"></div>
<div class="r" style="left:92px;top:0;width:12px;height:12px;background:#d3d3d3"></div>
<div class="r" style="left:104px;top:0;width:12px;height:12px;background:#dddddd"></div>
<div class="r" style="left:116px;top:0;width:12px;height:12px;background:#e0e0e0"></div>
<div class="r" style="left:128px;top:0;width:12px;height:12px;background:#e6e6e6"></div>
</div>
<div class="r" style="left:76px;top:267px;width:222px;height:12px;border-radius:0 6px 6px 0;overflow:hidden">
<div class="r" style="left:-6px;top:0;width:12px;height:12px;background:#e6e6e6"></div>
<div class="r" style="left:6px;top:0;width:12px;height:12px;background:#e6e6e6"></div>
<div class="r" style="left:18px;top:0;width:12px;height:12px;background:#e9e9e9"></div>
<div class="r" style="left:30px;top:0;width:12px;height:12px;background:#e6e6e6"></div>
<div class="r" style="left:42px;top:0;width:12px;height:12px;background:#e6e6e6"></div>
<div class="r" style="left:54px;top:0;width:12px;height:12px;background:#e3e3e3"></div>
<div class="r" style="left:66px;top:0;width:12px;height:12px;background:#e6e6e6"></div>
<div class="r" style="left:78px;top:0;width:12px;height:12px;background:#e0e0e0"></div>
<div class="r" style="left:90px;top:0;width:12px;height:12px;background:#e6e6e6"></div>
<div class="r" style="left:102px;top:0;width:12px;height:12px;background:#e6e6e6"></div>
<div class="r" style="left:114px;top:0;width:12px;height:12px;background:#e0e0e0"></div>
<div class="r" style="left:126px;top:0;width:12px;height:12px;background:#e6e6e6"></div>
<div class="r" style="left:138px;top:0;width:12px;height:12px;background:#e3e3e3"></div>
<div class="r" style="left:150px;top:0;width:12px;height:12px;background:#e6e6e6"></div>
<div class="r" style="left:162px;top:0;width:12px;height:12px;background:#e3e3e3"></div>
<div class="r" style="left:174px;top:0;width:12px;height:12px;background:#dddddd"></div>
<div class="r" style="left:186px;top:0;width:12px;height:12px;background:#e0e0e0"></div>
<div class="r" style="left:198px;top:0;width:12px;height:12px;background:#e3e3e3"></div>
<div class="r" style="left:210px;top:0;width:12px;height:12px;background:#eeeeee"></div>
</div>
<div class="r" style="left:70px;top:279px;width:12px;height:12px;background:#f7f7f7;"></div>
<div class="r" style="left:82px;top:279px;width:12px;height:12px;background:#f9f9f9;"></div>
<div class="r" style="left:94px;top:279px;width:12px;height:12px;background:#fdfdfd;"></div>
<div class="r" style="left:106px;top:279px;width:12px;height:12px;background:#fbfbfb;"></div>
<div class="r" style="left:118px;top:279px;width:12px;height:12px;background:#fdfdfd;"></div>
<div class="r" style="left:130px;top:279px;width:12px;height:12px;background:#fdfdfd;"></div>
<div class="r" style="left:142px;top:279px;width:12px;height:12px;background:#fbfbfb;"></div>
<div class="r" style="left:154px;top:279px;width:12px;height:12px;background:#f9f9f9;"></div>
<div class="r" style="left:166px;top:279px;width:12px;height:12px;background:#fbfbfb;"></div>
<div class="r" style="left:178px;top:279px;width:12px;height:12px;background:#f9f9f9;"></div>
<div class="r" style="left:190px;top:279px;width:12px;height:12px;background:#fdfdfd;"></div>
<div class="r" style="left:202px;top:279px;width:12px;height:12px;background:#f3f3f3;"></div>
<div class="r" style="left:214px;top:279px;width:12px;height:12px;background:#fdfdfd;"></div>
<div class="r" style="left:226px;top:279px;width:12px;height:12px;background:#fbfbfb;"></div>
<div class="r" style="left:238px;top:279px;width:12px;height:12px;background:#f9f9f9;"></div>
<div class="r" style="left:250px;top:279px;width:12px;height:12px;background:#fbfbfb;"></div>
<div class="r" style="left:262px;top:279px;width:12px;height:12px;background:#f9f9f9;"></div>
<div class="r" style="left:274px;top:279px;width:12px;height:12px;background:#fdfdfd;"></div>
<div class="r" style="left:286px;top:279px;width:12px;height:12px;background:#f9f9f9;"></div>
<div class="r" style="left:70px;top:291px;width:12px;height:12px;background:#eeeeee;"></div>
<div class="r" style="left:82px;top:291px;width:12px;height:12px;background:#e6e6e6;"></div>
<div class="r" style="left:94px;top:291px;width:12px;height:12px;background:#d9d9d9;"></div>
<div class="r" style="left:106px;top:291px;width:12px;height:12px;background:#dddddd;"></div>
<div class="r" style="left:118px;top:291px;width:12px;height:12px;background:#e0e0e0;"></div>
<div class="r" style="left:130px;top:291px;width:12px;height:12px;background:#e0e0e0;"></div>
<div class="r" style="left:142px;top:291px;width:12px;height:12px;background:#e6e6e6;"></div>
<div class="r" style="left:154px;top:291px;width:12px;height:12px;background:#dddddd;"></div>
<div class="r" style="left:166px;top:291px;width:12px;height:12px;background:#efefef;"></div>
<div class="r" style="left:178px;top:291px;width:12px;height:12px;background:#e3e3e3;"></div>
<div class="r" style="left:190px;top:291px;width:12px;height:12px;background:#e3e3e3;"></div>
<div class="r" style="left:202px;top:291px;width:12px;height:12px;background:#f3f3f3;"></div>
<div class="r" style="left:214px;top:291px;width:12px;height:12px;background:#e3e3e3;"></div>
<div class="r" style="left:226px;top:291px;width:12px;height:12px;background:#e6e6e6;"></div>
<div class="r" style="left:238px;top:291px;width:12px;height:12px;background:#e9e9e9;"></div>
<div class="r" style="left:250px;top:291px;width:12px;height:12px;background:#e9e9e9;"></div>
<div class="r" style="left:262px;top:291px;width:12px;height:12px;background:#eeeeee;"></div>
<div class="r" style="left:274px;top:291px;width:12px;height:12px;background:#e6e6e6;"></div>
<div class="r" style="left:286px;top:291px;width:12px;height:12px;background:#f5f5f5;"></div>
<div class="r" style="left:70px;top:303px;width:144px;height:12px;border-radius:6px 0 0 6px;overflow:hidden">
<div class="r" style="left:0px;top:0;width:12px;height:12px;background:#efefef"></div>
<div class="r" style="left:12px;top:0;width:12px;height:12px;background:#e3e3e3"></div>
<div class="r" style="left:24px;top:0;width:12px;height:12px;background:#e0e0e0"></div>
<div class="r" style="left:36px;top:0;width:12px;height:12px;background:#dddddd"></div>
<div class="r" style="left:48px;top:0;width:12px;height:12px;background:#dddddd"></div>
<div class="r" style="left:60px;top:0;width:12px;height:12px;background:#dddddd"></div>
<div class="r" style="left:72px;top:0;width:12px;height:12px;background:#dddddd"></div>
<div class="r" style="left:84px;top:0;width:12px;height:12px;background:#e0e0e0"></div>
<div class="r" style="left:96px;top:0;width:12px;height:12px;background:#e0e0e0"></div>
<div class="r" style="left:108px;top:0;width:12px;height:12px;background:#e3e3e3"></div>
<div class="r" style="left:120px;top:0;width:12px;height:12px;background:#e3e3e3"></div>
<div class="r" style="left:132px;top:0;width:12px;height:12px;background:#e6e6e6"></div>
</div>
<svg class="r" style="left:0;top:0" width="1515" height="601" viewBox="0 0 1515 601"><rect x="1297.8" y="147.7" width="108.4" height="49.8" rx="2.5" fill="none" stroke="#ff1e14" stroke-width="3"/><rect x="722.6" y="337.7" width="76" height="34.4" rx="2.5" fill="none" stroke="#ff1e14" stroke-width="2.8"/><rect x="367.7" y="488.7" width="243.8" height="74" rx="2.5" fill="none" stroke="#ff1e14" stroke-width="2.8"/><path d="M829.25 348.55 L1185.70 187.82 L1185.43 193.23 L1196.50 179.00 L1178.50 178.14 L1182.77 181.46 L828.75 347.45Z" fill="#ff1e14"/><path d="M1319.25 211.85 L639.44 515.14 L640.16 510.64 L629.00 524.80 L647.00 525.77 L643.15 523.34 L1319.75 212.95Z" fill="#ff1e14"/></svg>
<div class="r" style="left:1506px;top:104px;width:6px;height:497px;background:#c3c3c3;border-radius:3px 3px 0 0;"></div>
</div></body></html>
